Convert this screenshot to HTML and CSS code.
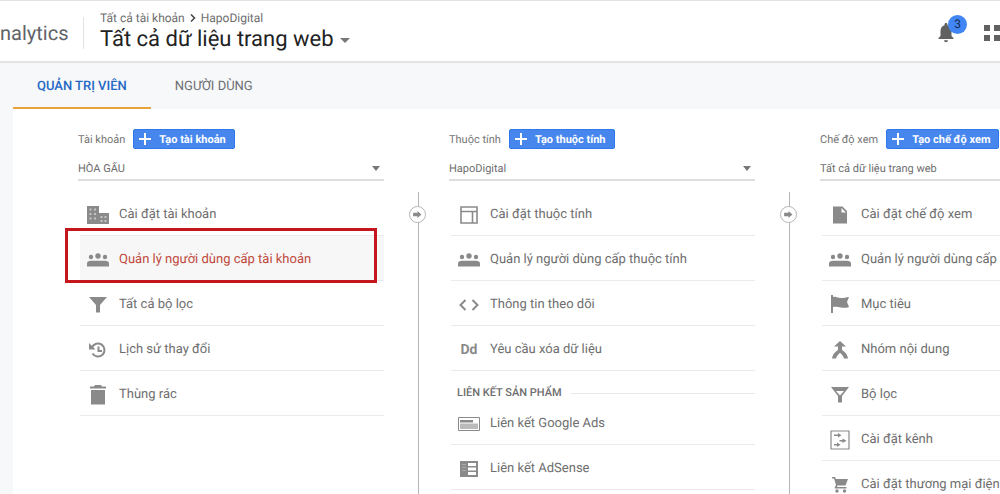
FILE: index.html
```
<!DOCTYPE html>
<html lang="vi">
<head>
<meta charset="utf-8">
<title>Analytics</title>
<link rel="stylesheet" href="styles.css">
</head>
<body>
<svg class="sprite" aria-hidden="true">
  <symbol id="people" viewBox="0 0 22 16"><circle cx="4" cy="5" r="2.200"/><circle cx="11" cy="4" r="2.700"/><circle cx="18" cy="5" r="2.200"/><path d="M0 14.500v-3c0-2 1.500-2.800 4-2.800h14c2.500 0 4 .8 4 2.800v3z"/></symbol>
  <symbol id="arrow" viewBox="0 0 10 8"><path d="M0 2h5V0l4.500 4L5 8V6H0z"/></symbol>
  <symbol id="plus" viewBox="0 0 12 12"><path d="M5 0h2v5h5v2H7v5H5V7H0V5h5z"/></symbol>
</svg>
<header class="header">
  <a class="brand" href="#">nalytics</a>
  <div class="view">
    <nav class="crumbs"><a href="#">Tất cả tài khoản</a><svg width="6" height="8" viewBox="0 0 6 8"><path d="M1 0.500 4.500 4 1 7.500" fill="none" stroke="#444" stroke-width="1.500"/></svg><a href="#">HapoDigital</a></nav>
    <button class="view-name">Tất cả dữ liệu trang web<span class="caret"></span></button>
  </div>
  <button class="bell" aria-label="Thông báo"><svg width="16" height="20" viewBox="0 0 16 20"><path d="M8 0c-1 0-1.500.6-1.500 1.500v.8C4 3 2.500 5 2.500 8v5L.5 15v1h15v-1l-2-2V8c0-3-1.500-5-4-5.700v-.8C9.500.6 9 0 8 0zM6 17.200a2 2 0 0 0 4 0z"/></svg><span class="badge">3</span></button>
  <button class="apps" aria-label="Ứng dụng"><svg width="26" height="16" viewBox="0 0 26 16"><path d="M0 0h6v6H0zM10 0h6v6h-6zM20 0h6v6h-6zM0 10h6v6H0zM10 10h6v6h-6zM20 10h6v6h-6z"/></svg></button>
</header>
<main class="admin">
  <nav class="tabs"><a class="tab active" href="#">QUẢN TRỊ VIÊN</a><a class="tab" href="#">NGƯỜI DÙNG</a></nav>
  <div class="columns">
    <section class="column">
      <div class="column-head"><label for="account">Tài khoản</label><button class="create"><svg width="12" height="12"><use href="#plus"/></svg>Tạo tài khoản</button></div>
      <div class="picker"><select id="account"><option>HÒA GẤU</option></select><span class="caret"></span></div>
      <ul class="menu">
        <li><a href="#"><span class="icon"><svg width="22" height="20" viewBox="0 0 22 20"><path d="M0 1h12v7h10v11H0z"/><path d="M2.500 3.500h2v2h-2zM7 3.500h2v2H7zM2.500 8h2v2h-2zM7 8h2v2H7zM2.500 12.500h2v2h-2zM7 12.500h2v2H7zM13.500 11h2v2h-2zM17.500 11h2v2h-2zM13.500 15h2v2h-2zM17.500 15h2v2h-2z" fill="#c4c4c4"/></svg></span>Cài đặt tài khoản</a></li>
        <li class="selected"><a href="#"><span class="icon"><svg width="22" height="16"><use href="#people"/></svg></span>Quản lý người dùng cấp tài khoản</a></li>
        <li><a href="#"><span class="icon"><svg width="18" height="18" viewBox="0 0 18 18"><path d="M0 1h18l-7 8v7.500H7V9z"/></svg></span>Tất cả bộ lọc</a></li>
        <li><a href="#"><span class="icon"><svg width="18" height="18" viewBox="0 0 18 18"><path d="M3 6.500A6.500 6.500 0 1 1 3.500 12.500M9.500 5.500V10H13" fill="none" stroke="#8a8a8a" stroke-width="2"/><path d="M0 2v6.500h6.500z"/></svg></span>Lịch sử thay đổi</a></li>
        <li><a href="#"><span class="icon"><svg width="16" height="20" viewBox="0 0 16 20"><path d="M5 0h6l1 1.500h4v2H0v-2h4zM1 5h14v14.500H1z"/></svg></span>Thùng rác</a></li>
      </ul>
    </section>
    <div class="divider"><span class="node"><svg width="9" height="7"><use href="#arrow"/></svg></span></div>
    <section class="column">
      <div class="column-head"><label for="property">Thuộc tính</label><button class="create"><svg width="12" height="12"><use href="#plus"/></svg>Tạo thuộc tính</button></div>
      <div class="picker"><select id="property"><option>HapoDigital</option></select><span class="caret"></span></div>
      <ul class="menu">
        <li><a href="#"><span class="icon"><svg width="18" height="18" viewBox="0 0 18 18"><path d="M1 1h16v16H1zM1 5.500h16M12.500 5.500V17" fill="none" stroke="#8a8a8a" stroke-width="1.600"/></svg></span>Cài đặt thuộc tính</a></li>
        <li><a href="#"><span class="icon"><svg width="22" height="16"><use href="#people"/></svg></span>Quản lý người dùng cấp thuộc tính</a></li>
        <li><a href="#"><span class="icon"><svg width="20" height="12" viewBox="0 0 20 12"><path d="M6.500 1 1.500 6l5 5M13.500 1l5 5-5 5" fill="none" stroke="#8a8a8a" stroke-width="2"/></svg></span>Thông tin theo dõi</a></li>
        <li><a href="#"><span class="icon letters">Dd</span>Yêu cầu xóa dữ liệu</a></li>
      </ul>
      <h2 class="group">LIÊN KẾT SẢN PHẨM</h2>
      <ul class="menu">
        <li><a href="#"><span class="icon"><svg width="22" height="14" viewBox="0 0 22 14"><path d="M.5.500h21v13H.5z" fill="none" stroke="#8a8a8a"/><path d="M2 3h13v2.500H2z"/><path d="M2 6.500h18V12H2z" fill="#bbb"/></svg></span>Liên kết Google Ads</a></li>
        <li><a href="#"><span class="icon"><svg width="18" height="18" viewBox="0 0 18 18"><path fill-rule="evenodd" d="M0 1h18v16H0zM8 3v3h8V3zM8 7.500v3h8v-3zM8 12v3h8v-3z"/><path d="M2 4.500h4M2 7.500h4M2 10.500h4" stroke="#aaa"/></svg></span>Liên kết AdSense</a></li>
      </ul>
    </section>
    <div class="divider"><span class="node"><svg width="9" height="7"><use href="#arrow"/></svg></span></div>
    <section class="column">
      <div class="column-head"><label for="view">Chế độ xem</label><button class="create"><svg width="12" height="12"><use href="#plus"/></svg>Tạo chế độ xem</button></div>
      <div class="picker"><select id="view"><option>Tất cả dữ liệu trang web</option></select><span class="caret"></span></div>
      <ul class="menu">
        <li><a href="#"><span class="icon"><svg width="14" height="18" viewBox="0 0 14 18"><path fill-rule="evenodd" d="M0 .5h9.500L14 5v12.500H0zM8.500 2v4.500h4.500z"/></svg></span>Cài đặt chế độ xem</a></li>
        <li><a href="#"><span class="icon"><svg width="22" height="16"><use href="#people"/></svg></span>Quản lý người dùng cấp chế độ xem</a></li>
        <li><a href="#"><span class="icon"><svg width="18" height="20" viewBox="0 0 18 20"><path d="M0 0h2v2c3-1 5 1 8 1s5-.5 8-1l-2 5 2 5c-3 1-5 1-8 .5S5 11.500 2 12v6H0z"/></svg></span>Mục tiêu</a></li>
        <li><a href="#"><span class="icon"><svg width="18" height="18" viewBox="0 0 18 18"><path d="M9 0l6 5.500h-4v3.300l2.500 2.200c2 1.800 3 3.500 3.500 6.500h-4c-.4-2-1.800-4-4-5.800C7 13.500 5.500 15.500 5 17.500H1c.5-3 1.500-4.700 3.500-6.500L7 8.800V5.500H3z"/></svg></span>Nhóm nội dung</a></li>
        <li><a href="#"><span class="icon"><svg width="18" height="18" viewBox="0 0 18 18"><path fill-rule="evenodd" d="M0 1h18l-7 9v6.500H7V10zM5 5l4 4.500L13 5z"/></svg></span>Bộ lọc</a></li>
        <li><a href="#"><span class="icon"><svg width="20" height="20" viewBox="0 0 20 20"><path d="M1 1h18v18H1z" fill="none" stroke="#8a8a8a" stroke-width="1.200"/><path d="M4 4.500h4V3l3.500 2.200L8 7.500V6H4zM9.500 10h3V8.500L16.500 10.700l-4 2.200v-1.400h-3zM4 14h3v-1.500l3.500 2.300L7 17v-1.500H4z"/></svg></span>Cài đặt kênh</a></li>
        <li><a href="#"><span class="icon"><svg width="16" height="16" viewBox="0 0 16 16"><path d="M0 0h3l1 2h12l-2.500 6.500H5.500l-.5 1.500h9.500v1.500H3l-.3-1L4 8 2 1.500H0z"/><circle cx="5" cy="14" r="1.700"/><circle cx="12.500" cy="14" r="1.700"/></svg></span>Cài đặt thương mại điện tử</a></li>
      </ul>
    </section>
  </div>
</main>
</body>
</html>
```
FILE: styles.css
```
* { box-sizing: border-box; }
body { margin: 0; background: #fff; color: #6e6e6e; font-family: Roboto, "Liberation Sans", sans-serif; text-rendering: geometricPrecision; overflow: hidden; }
a { color: inherit; text-decoration: none; }
button, select { font: inherit; color: inherit; border: 0; background: none; padding: 0; text-rendering: inherit; }
svg { fill: #8a8a8a; flex: none; }
.sprite { display: none; }
.caret { border: 5px solid transparent; border-top-color: #777; border-bottom: 0; }

.header { display: flex; align-items: center; height: 63px; border-top: 1px solid #e2e2e2; border-bottom: 2px solid #e3e4e5; overflow: hidden; }
.brand { width: 84px; font-size: 20px; line-height: 32px; margin-top: 4px; border-right: 1px solid #e2e2e2; color: #5f6368; }
.view { padding-left: 16px; flex: 1; }
.crumbs { display: flex; align-items: center; gap: 5px; font-size: 12px; line-height: 14px; margin-top: 4px; }
.view-name { display: flex; align-items: center; gap: 6px; font-size: 22px; line-height: 30px; color: #222; white-space: nowrap; }
.bell { position: relative; width: 16px; height: 20px; margin: 3px 30px 0 0; }
.bell svg, .apps svg { display: block; fill: #616161; }
.badge { position: absolute; left: 10px; top: -8px; width: 19px; height: 19px; border-radius: 50%; background: #4285f4; color: #172b50; font-size: 12px; line-height: 19px; text-align: center; }
.apps { margin: 3px -10px 0 0; }

.admin { border-left: 13px solid #f7f8fa; }
.tabs { display: flex; background: #f7f8fa; font-size: 13px; line-height: 40px; }
.tab { padding: 4px 24px 0; border-bottom: 2px solid transparent; color: #6b6e72; }
.tab.active { color: #2568c4; font-weight: 500; border-color: #e8a33d; }

.columns { display: flex; padding: 17px 0 0 65px; }
.column { flex: 0 0 306px; }
.column-head { display: flex; align-items: center; gap: 8px; height: 26px; font-size: 11px; color: #757575; }
.create { display: flex; align-items: center; gap: 8px; height: 20px; padding: 0 8px 0 5px; background: #4787ed; border: 1px solid #3079ed; border-radius: 2px; color: #fff; font-weight: 700; white-space: nowrap; }
.create svg { fill: #fff; }
.picker { display: flex; align-items: center; height: 29px; border-bottom: 2px solid #dedede; padding: 5px 4px 0 0; font-size: 11px; }
.picker select { flex: 1; appearance: none; }
.picker .caret { border-width: 5px 4px 0; }

.menu { list-style: none; margin: 0 0 0 2px; padding: 0; font-size: 13px; }
.picker + .menu { margin-top: 10px; }
.menu li { position: relative; border-bottom: 1px solid #ebebeb; }
.menu a { display: flex; align-items: center; height: 44px; padding-top: 3px; gap: 7px; white-space: nowrap; }
.icon { display: flex; justify-content: center; flex: 0 0 32px; padding-left: 4px; }
.letters { font-size: 14px; font-weight: 700; color: #8a8a8a; }
.menu .selected { background: #f7f7f7; color: #c0483c; }
.selected::after { content: ""; position: absolute; top: -8px; left: -15px; right: 7px; bottom: -3px; border: 3px solid #c4161c; }
.group { display: flex; align-items: center; gap: 9px; margin: 0 0 0 8px; padding-top: 15px; font-size: 11px; font-weight: 500; line-height: 14px; }
.group::after { content: ""; flex: 1; height: 1px; background: #e8e8e8; }

.divider { position: relative; flex: 0 0 65px; margin-top: 66px; min-height: 303px; background: linear-gradient(#b5b5b5, #b5b5b5) 34px 0 / 1px 100% no-repeat; }
.node { position: absolute; left: 25px; top: 14px; width: 17px; height: 17px; display: flex; align-items: center; justify-content: center; border: 1px solid #b5b5b5; border-radius: 50%; background: #fff; }
```
